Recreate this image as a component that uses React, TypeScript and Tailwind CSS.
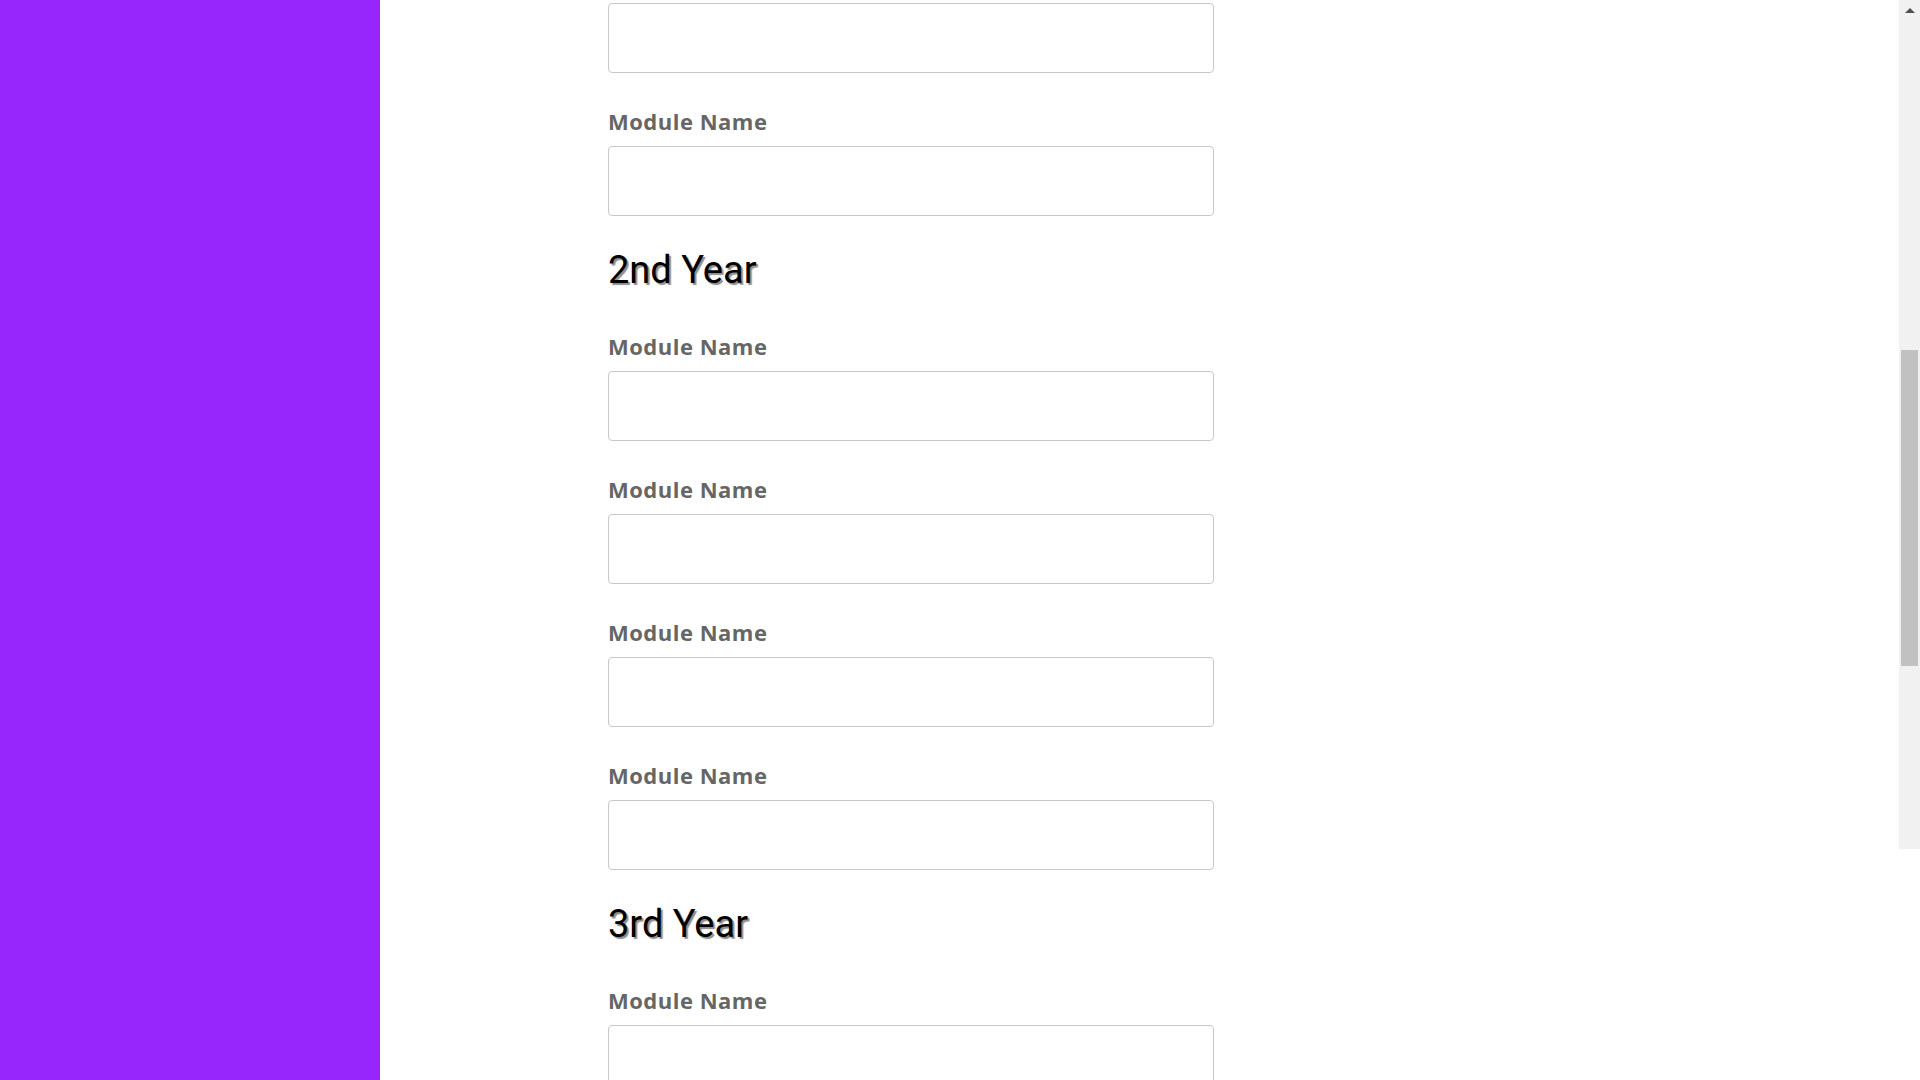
import React from 'react';

type Section = {
  title?: string;
  fields: number;
};

const sections: Section[] = [
  { fields: 2 },
  { title: '2nd Year', fields: 4 },
  { title: '3rd Year', fields: 2 },
];

function Field({ first }: { first?: boolean }) {
  return (
    <div className={first ? 'mt-[41px]' : 'mt-[36px]'}>
      <label className="block font-['Open_Sans',sans-serif] text-[22px] leading-[24px] font-bold tracking-[0.5px] text-[#666666] mb-[13px]">
        Module Name
      </label>
      <input
        type="text"
        className="block w-[606px] h-[70px] border border-[#c8c8c8] rounded-[4px] bg-white outline-none"
      />
    </div>
  );
}

export default function App() {
  return (
    <div
      className="flex h-screen overflow-hidden bg-white"
      style={{ fontFamily: 'Roboto, "Liberation Sans", sans-serif' }}
    >
      <aside className="w-[380px] shrink-0 bg-[#9626fb]" />

      <main className="flex-1 overflow-hidden">
        <div className="ml-[228px] w-[606px] pt-[3px]">
          {/* tail of the 1st year, scrolled off the top */}
          <input
            type="text"
            className="block w-[606px] h-[70px] border border-[#c8c8c8] rounded-[4px] bg-white outline-none"
          />
          <Field />

          {sections.slice(1).map((section) => (
            <div key={section.title}>
              <h2 className="mt-[31px] text-[38px] leading-[46px] font-normal text-black [text-shadow:2px_2px_1px_rgba(0,0,0,0.45)]">
                {section.title}
              </h2>
              {Array.from({ length: section.fields }).map((_, i) => (
                <Field key={i} first={i === 0} />
              ))}
            </div>
          ))}
        </div>
      </main>

      {/* page scrollbar */}
      <div className="w-[21px] shrink-0 h-[849px] bg-[#f1f1f1] flex flex-col items-center">
        <div className="mt-[8px] w-0 h-0 border-l-[5px] border-r-[5px] border-b-[5px] border-l-transparent border-r-transparent border-b-[#505050]" />
        <div className="mt-[337px] w-[17px] h-[316px] bg-[#c1c1c1]" />
      </div>
    </div>
  );
}
